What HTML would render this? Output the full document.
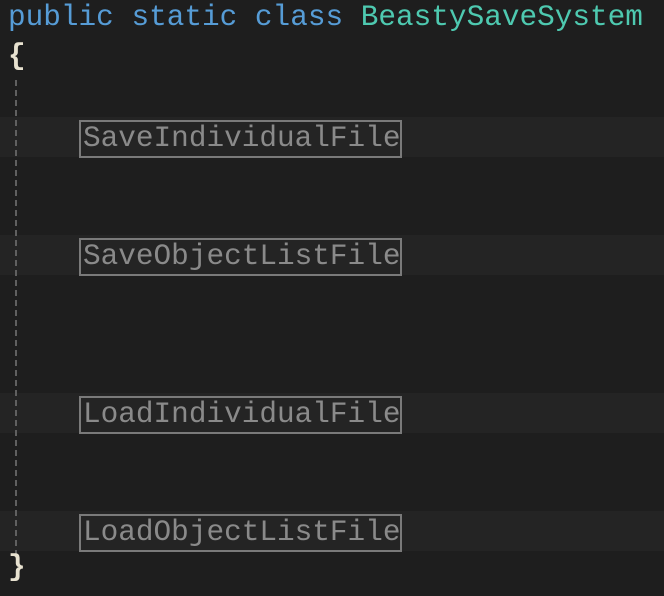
<!DOCTYPE html>
<html><head><style>
html,body{margin:0;padding:0;background:#1e1e1e;width:664px;height:596px;overflow:hidden;position:relative;font-family:"Liberation Mono",monospace;font-size:29.4px}
.t{position:absolute;white-space:pre;line-height:36px}
.band{position:absolute;left:0;width:664px;height:40px;background:#242424}
.box{position:absolute;left:79px;width:317px;height:34px;border:2px solid #7a7a7a;color:#8a8a8a;line-height:34px;padding-left:2px;box-sizing:content-box;white-space:pre;overflow:hidden}
.guide{position:absolute;left:15px;top:80px;height:476px;width:0;border-left:2px dashed #606060}
</style></head><body>
<div class="band" style="top:117px"></div>
<div class="band" style="top:235px"></div>
<div class="band" style="top:393px"></div>
<div class="band" style="top:511px"></div>
<div class="t" style="left:8px;top:0px"><span style="color:#569cd6">public static class </span><span style="color:#4ec9b0">BeastySaveSystem</span></div>
<div class="t" style="left:8px;top:39px;color:#e8e2d0;font-weight:bold">{</div>
<div class="guide"></div>
<div class="box" style="top:120px">SaveIndividualFile</div>
<div class="box" style="top:238px">SaveObjectListFile</div>
<div class="box" style="top:396px">LoadIndividualFile</div>
<div class="box" style="top:514px">LoadObjectListFile</div>
<div class="t" style="left:8px;top:550px;color:#e8e2d0;font-weight:bold">}</div>
</body></html>
